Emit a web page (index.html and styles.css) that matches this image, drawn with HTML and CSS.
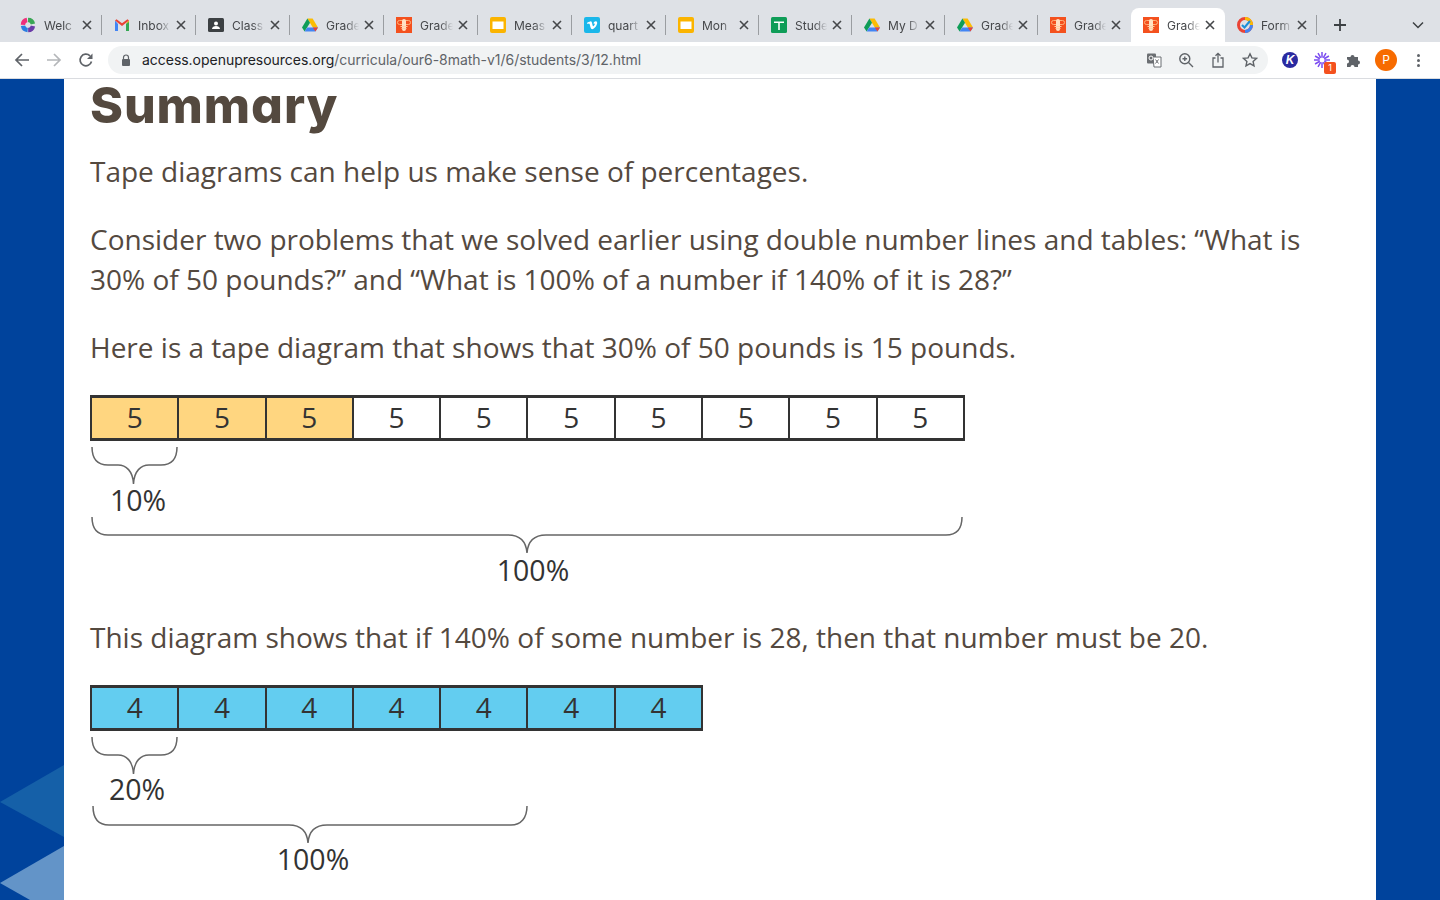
FILE: index.html
```html
<!DOCTYPE html>
<html lang="en">
<head>
  <meta charset="UTF-8" />
  <title>Summary</title>
  <link rel="stylesheet" href="styles.css">
</head>
<body>

  <svg class="defs" width="0" height="0">
    <symbol id="i-drive" viewBox="0 0 16 16">
      <path d="M5.400 1.500h5.200L16 10.500h-5.200z" fill="#fbbc04"/>
      <path d="M5.400 1.500 0 10.600l2.600 4L8 5.700z" fill="#0f9d58"/>
      <path d="M2.600 14.600h10.800l2.600-4.100H5.200z" fill="#4285f4"/>
      <path d="M16 10.500h-5.200l2.600 4.100z" fill="#ea4335"/>
    </symbol>
    <symbol id="i-bee" viewBox="0 0 16 16">
      <rect width="16" height="16" fill="#f4511e"/>
      <rect x="1.500" y="3.500" width="13" height="4" rx="2" fill="none" stroke="#ffb27a" stroke-width="1"/>
      <rect x="6" y="2" width="4" height="12" rx="2" fill="#ffe2c4"/>
      <path d="M4.500 9.500h7M5.500 11.500h5" stroke="#ffd0a6" stroke-width="1.200"/>
    </symbol>
    <symbol id="i-slides" viewBox="0 0 16 16">
      <rect width="16" height="16" rx="2" fill="#fbb400"/>
      <rect x="2.500" y="4.500" width="11" height="7.500" fill="#fff"/>
    </symbol>
    <symbol id="i-close" viewBox="0 0 10 10">
      <path d="M1 1l8 8M9 1l-8 8" stroke="#45474a" stroke-width="1.600" fill="none"/>
    </symbol>
  </svg>

  <!-- Browser tabs -->
  <div class="tabstrip">
    <div class="tab">
      <svg class="favicon" viewBox="0 0 16 16">
        <circle cx="8" cy="8" r="5" fill="none" stroke="#6a3aa8" stroke-width="4.500" stroke-dasharray="6.500 25" stroke-dashoffset="-1"/>
        <circle cx="8" cy="8" r="5" fill="none" stroke="#2a7de1" stroke-width="4.500" stroke-dasharray="6.500 25" stroke-dashoffset="-8"/>
        <circle cx="8" cy="8" r="5" fill="none" stroke="#ef2f7b" stroke-width="4.500" stroke-dasharray="6.500 25" stroke-dashoffset="-15.500"/>
        <circle cx="8" cy="8" r="5" fill="none" stroke="#3aa655" stroke-width="4.500" stroke-dasharray="6.500 25" stroke-dashoffset="-23"/>
        <circle cx="8" cy="8" r="2.500" fill="#dee1e6"/>
      </svg>
      <span class="tab-title">Welc</span>
      <svg class="tab-close"><use href="#i-close"/></svg>
    </div>
    <div class="tab">
      <svg class="favicon" viewBox="0 0 16 16">
        <path d="M1 3.500V14h3V7z" fill="#4285f4"/>
        <path d="M15 3.500V14h-3V7z" fill="#34a853"/>
        <path d="M1 3.500 8 9l7-5.500-1.500-1.200L8 6.300 2.500 2.300z" fill="#ea4335"/>
        <path d="M12 7l3-3.500V5z" fill="#fbbc04"/>
      </svg>
      <span class="tab-title">Inbox</span>
      <svg class="tab-close"><use href="#i-close"/></svg>
    </div>
    <div class="tab">
      <svg class="favicon" viewBox="0 0 16 16">
        <rect width="16" height="14" y="1" rx="1.500" fill="#3c4043"/>
        <circle cx="8" cy="6.500" r="2" fill="#fff"/>
        <path d="M4 12c0-2 2-3 4-3s4 1 4 3z" fill="#fff"/>
      </svg>
      <span class="tab-title">Class</span>
      <svg class="tab-close"><use href="#i-close"/></svg>
    </div>
    <div class="tab">
      <svg class="favicon"><use href="#i-drive"/></svg>
      <span class="tab-title">Grade</span>
      <svg class="tab-close"><use href="#i-close"/></svg>
    </div>
    <div class="tab">
      <svg class="favicon"><use href="#i-bee"/></svg>
      <span class="tab-title">Grade</span>
      <svg class="tab-close"><use href="#i-close"/></svg>
    </div>
    <div class="tab">
      <svg class="favicon"><use href="#i-slides"/></svg>
      <span class="tab-title">Meas</span>
      <svg class="tab-close"><use href="#i-close"/></svg>
    </div>
    <div class="tab">
      <svg class="favicon" viewBox="0 0 16 16">
        <rect width="16" height="16" rx="2" fill="#1ab7ea"/>
        <path d="M2.800 6l.9 1.100c1-.8 1.600-.9 2 .1.600 1.900 1 5 2.500 5 2 0 5-4.200 5-6.300 0-2-3-2.300-3.800 .7 1.600-.7 1.800 .5 .7 2-.8 1.100-1.300 1.100-1.700-1-.4-2.300-.8-3.600-2-3.200C5.200 4.700 3.900 5 2.800 6z" fill="#fff"/>
      </svg>
      <span class="tab-title">quart</span>
      <svg class="tab-close"><use href="#i-close"/></svg>
    </div>
    <div class="tab tab-narrow">
      <svg class="favicon"><use href="#i-slides"/></svg>
      <span class="tab-title">Mon</span>
      <svg class="tab-close"><use href="#i-close"/></svg>
    </div>
    <div class="tab tab-narrow">
      <svg class="favicon" viewBox="0 0 16 16">
        <rect width="16" height="16" rx="1.500" fill="#0f9d58"/>
        <path d="M3 4.500h10v1.500H8.800v7H7.200V6H3z" fill="#fff"/>
      </svg>
      <span class="tab-title">Stude</span>
      <svg class="tab-close"><use href="#i-close"/></svg>
    </div>
    <div class="tab tab-narrow">
      <svg class="favicon"><use href="#i-drive"/></svg>
      <span class="tab-title">My D</span>
      <svg class="tab-close"><use href="#i-close"/></svg>
    </div>
    <div class="tab tab-narrow">
      <svg class="favicon"><use href="#i-drive"/></svg>
      <span class="tab-title">Grade</span>
      <svg class="tab-close"><use href="#i-close"/></svg>
    </div>
    <div class="tab tab-narrow tab-before-active">
      <svg class="favicon"><use href="#i-bee"/></svg>
      <span class="tab-title">Grade</span>
      <svg class="tab-close"><use href="#i-close"/></svg>
    </div>
    <div class="tab tab-active">
      <svg class="favicon"><use href="#i-bee"/></svg>
      <span class="tab-title">Grade</span>
      <svg class="tab-close"><use href="#i-close"/></svg>
    </div>
    <div class="tab tab-last">
      <svg class="favicon" viewBox="0 0 16 16">
        <circle cx="8" cy="8" r="6.500" fill="none" stroke="#ea4335" stroke-width="3"/>
        <path d="M8 1.500A6.500 6.500 0 0 1 14.500 8" fill="none" stroke="#fbbc04" stroke-width="3"/>
        <path d="M14.500 8A6.500 6.500 0 0 1 8 14.500" fill="none" stroke="#4285f4" stroke-width="3"/>
        <path d="M5 8l2.500 2.500L13 4" fill="none" stroke="#1a8fd8" stroke-width="2"/>
      </svg>
      <span class="tab-title">Form</span>
      <svg class="tab-close"><use href="#i-close"/></svg>
    </div>
    <svg class="new-tab" viewBox="0 0 14 14"><path d="M7 1v12M1 7h12" stroke="#3c4043" stroke-width="1.800"/></svg>
    <svg class="tab-search" viewBox="0 0 12 8"><path d="M1 1.500l5 5 5-5" stroke="#3c4043" stroke-width="1.500" fill="none"/></svg>
  </div>

  <!-- Toolbar -->
  <div class="toolbar">
    <svg class="nav-icon" viewBox="0 0 16 16"><path d="M15 8H2M8 2 2 8l6 6" stroke="#5f6368" stroke-width="1.700" fill="none"/></svg>
    <svg class="nav-icon" viewBox="0 0 16 16"><path d="M1 8h13M8 2l6 6-6 6" stroke="#b4b6b9" stroke-width="1.700" fill="none"/></svg>
    <svg class="nav-icon" viewBox="0 0 16 16"><path d="M13.500 9.500A5.800 5.800 0 1 1 12 3.900" stroke="#5f6368" stroke-width="1.700" fill="none"/><path d="M14.500 1.500v5.500H9z" fill="#5f6368"/></svg>
    <div class="omnibox">
      <svg class="lock" viewBox="0 0 10 12"><path d="M2.500 5V3.500a2.500 2.500 0 0 1 5 0V5" stroke="#5f6368" stroke-width="1.200" fill="none"/><rect y="5" width="8" height="7" rx="1" x="1" fill="#5f6368"/></svg>
      <span class="url"><span class="url-host">access.openupresources.org</span>/curricula/our6-8math-v1/6/students/3/12.html</span>
      <div class="omni-actions">
        <svg class="omni-icon" viewBox="0 0 16 16"><rect x="1" y="1.500" width="9" height="10" rx="1" fill="#6b6e72"/><path d="M7 5h8v10H8z" fill="#fff" stroke="#6b6e72"/><path d="M9.500 7.500l3 4M12.500 7.500l-3 4" stroke="#6b6e72"/><circle cx="5" cy="6" r="2" fill="none" stroke="#fff"/></svg>
        <svg class="omni-icon" viewBox="0 0 16 16"><circle cx="6.800" cy="6.800" r="5" stroke="#5f6368" stroke-width="1.400" fill="none"/><path d="M10.500 10.500 15 15M4.500 6.800h4.600M6.800 4.500v4.600" stroke="#5f6368" stroke-width="1.400"/></svg>
        <svg class="omni-icon" viewBox="0 0 16 16"><path d="M5.500 6H3v9h10V6h-2.500M8 10.500V1.500M5.500 3.800 8 1.300l2.500 2.500" stroke="#5f6368" stroke-width="1.300" fill="none"/></svg>
        <svg class="omni-icon" viewBox="0 0 16 16"><path d="M8 1.800l1.900 4.100 4.500.5-3.300 3 .9 4.400L8 11.600l-4 2.200.9-4.400-3.300-3 4.500-.5z" stroke="#5f6368" stroke-width="1.400" fill="none"/></svg>
      </div>
    </div>
    <div class="extensions">
      <div class="ext-k">K</div>
      <div class="ext-burst">
        <svg viewBox="0 0 16 16"><path d="M8 0v16M4 1.070l8 13.860M1.070 4l13.860 8M0 8h16M1.070 12l13.860-8M4 14.930l8-13.860" stroke="#7b4df0" stroke-width="1.500"/><circle cx="8" cy="8" r="2.500" fill="#fff"/></svg>
        <span class="ext-badge">1</span>
      </div>
      <svg class="ext-puzzle" viewBox="0 0 16 16"><path d="M1 5h3.500a2 2 0 1 1 4 0H12v3.500a2 2 0 1 1 0 4V15H8.500a2 2 0 1 0-4 0H1v-3.500a2 2 0 1 0 0-4z" fill="#5f6368"/></svg>
      <div class="avatar">P</div>
      <div class="menu-dots"><i></i><i></i><i></i></div>
    </div>
  </div>

  <!-- Page -->
  <div class="page">
    <div class="side side-left">
      <svg class="side-art" viewBox="0 0 64 135" width="64" height="135">
        <path d="M0 37 64 0v72z" fill="#1560a8"/>
        <path d="M0 118 64 81v54H30z" fill="#6394c8"/>
      </svg>
    </div>

    <main class="content">
      <h1>Summary</h1>
      <p>Tape diagrams can help us make sense of percentages.</p>
      <p>Consider two problems that we solved earlier using double number lines and tables: “What is 30% of 50 pounds?” and “What is 100% of a number if 140% of it is 28?”</p>
      <p>Here is a tape diagram that shows that 30% of 50 pounds is 15 pounds.</p>

      <div class="figure">
        <div class="tape">
          <div class="cell cell-yellow">5</div>
          <div class="cell cell-yellow">5</div>
          <div class="cell cell-yellow">5</div>
          <div class="cell">5</div>
          <div class="cell">5</div>
          <div class="cell">5</div>
          <div class="cell">5</div>
          <div class="cell">5</div>
          <div class="cell">5</div>
          <div class="cell">5</div>
        </div>
        <svg class="braces" width="880" height="150" viewBox="0 0 880 150">
          <path d="M2 5c0 12 5 18 16 18h10c8 0 15 6 15.500 19 .5-13 7.500-19 15.500-19h12c10 0 16-6 16-18"/>
          <text x="48" y="69">10%</text>
          <path d="M2 75c0 12 5 18 16 18h400c10 0 18 5 19 18 1-13 9-18 19-18h400c10 0 16-6 16-18"/>
          <text x="443" y="139">100%</text>
        </svg>
      </div>

      <p class="after-figure">This diagram shows that if 140% of some number is 28, then that number must be 20.</p>

      <div class="figure">
        <div class="tape">
          <div class="cell cell-blue">4</div>
          <div class="cell cell-blue">4</div>
          <div class="cell cell-blue">4</div>
          <div class="cell cell-blue">4</div>
          <div class="cell cell-blue">4</div>
          <div class="cell cell-blue">4</div>
          <div class="cell cell-blue">4</div>
        </div>
        <svg class="braces" width="880" height="150" viewBox="0 0 880 150">
          <path d="M2 5c0 12 5 18 16 18h10c8 0 15 6 15.500 19 .5-13 7.500-19 15.500-19h12c10 0 16-6 16-18"/>
          <text x="47" y="68">20%</text>
          <path d="M3 74c0 12 5 19 16 19h180c10 0 18 5 19 18 1-13 9-18 19-18h184c10 0 16-7 16-19"/>
          <text x="223" y="138">100%</text>
        </svg>
      </div>
    </main>

    <div class="side"></div>
  </div>

</body>
</html>
```

FILE: styles.css
```css
html, body {
  margin: 0;
  height: 900px;
  overflow: hidden;
}

body {
  font-family: 'Open Sans', sans-serif;
  background: #fff;
  color: #54493f;
  display: flex;
  flex-direction: column;
}

.defs {
  position: absolute;
}

/* Tab strip */
.tabstrip {
  height: 42px;
  flex: none;
  background: #dee1e6;
  display: flex;
  align-items: flex-end;
  padding-left: 8px;
  box-sizing: border-box;
  font-family: Inter, 'Liberation Sans', sans-serif;
}

.tab {
  width: 94px;
  height: 34px;
  flex: none;
  box-sizing: border-box;
  display: flex;
  align-items: center;
  padding: 0 10px 0 12px;
  position: relative;
  font-size: 12px;
  color: #45474a;
}

.tab::after {
  content: "";
  position: absolute;
  right: 0;
  top: 7px;
  height: 20px;
  width: 1px;
  background: #9a9da1;
}

.tab-narrow {
  width: 93px;
}

.tab-last {
  width: 92px;
}

.tab-active {
  background: #fff;
  border-radius: 8px 8px 0 0;
}

.tab-active::after,
.tab-before-active::after {
  display: none;
}

.favicon {
  width: 16px;
  height: 16px;
  flex: none;
  margin-right: 8px;
}

.tab-title {
  flex: 1;
  white-space: nowrap;
  -webkit-mask-image: linear-gradient(to right, #000 55%, transparent 92%);
  mask-image: linear-gradient(to right, #000 55%, transparent 92%);
}

.tab-close {
  width: 10px;
  height: 10px;
  flex: none;
  margin-left: 2px;
}

.new-tab {
  width: 14px;
  height: 14px;
  margin: 0 0 10px 16px;
}

.tab-search {
  width: 12px;
  height: 8px;
  margin: 0 0 13px auto;
  padding-right: 16px;
}

/* Toolbar */
.toolbar {
  height: 36px;
  flex: none;
  background: #fff;
  border-bottom: 1px solid #dadce0;
  display: flex;
  align-items: center;
  padding-left: 6px;
  font-family: Inter, 'Liberation Sans', sans-serif;
}

.nav-icon {
  width: 16px;
  height: 16px;
  flex: none;
  margin: 0 8px;
}

.omnibox {
  width: 1160px;
  height: 28px;
  margin-left: 6px;
  border-radius: 14px;
  background: #f1f3f4;
  display: flex;
  align-items: center;
  padding: 0 10px 0 13px;
  box-sizing: border-box;
  font-size: 14px;
  letter-spacing: -0.03px;
  color: #5f6368;
}

.lock {
  width: 10px;
  height: 12px;
  margin-right: 11px;
}

.url {
  padding-bottom: 2px;
}

.url-host {
  color: #202124;
}

.omni-actions {
  margin-left: auto;
  display: flex;
  gap: 16px;
}

.omni-icon {
  width: 16px;
  height: 16px;
}

.extensions {
  display: grid;
  grid-auto-flow: column;
  grid-auto-columns: 32px;
  justify-items: center;
  align-items: center;
  margin-left: 6px;
}

.ext-k {
  width: 16px;
  height: 16px;
  border-radius: 50%;
  background: #2a2aa0;
  color: #fff;
  font: italic 700 12px/16px 'Liberation Sans', sans-serif;
  text-align: center;
}

.ext-burst {
  width: 16px;
  height: 16px;
  position: relative;
}

.ext-burst svg {
  display: block;
}

.ext-badge {
  position: absolute;
  left: 10px;
  top: 10px;
  width: 12px;
  height: 12px;
  background: #f4511e;
  border-radius: 2px;
  color: #fff;
  font-size: 9px;
  line-height: 12px;
  text-align: center;
}

.ext-puzzle {
  width: 16px;
  height: 16px;
}

.avatar {
  width: 22px;
  height: 22px;
  border-radius: 50%;
  background: #f76b00;
  color: #fff;
  font-size: 12px;
  line-height: 22px;
  text-align: center;
}

.menu-dots {
  display: flex;
  flex-direction: column;
  gap: 2px;
}

.menu-dots i {
  width: 3px;
  height: 3px;
  border-radius: 50%;
  background: #5f6368;
}

/* Page */
.page {
  flex: 1;
  display: flex;
}

.side {
  width: 64px;
  flex: none;
  background: #00439c;
}

.side-left {
  position: relative;
}

.side-art {
  position: absolute;
  left: 0;
  bottom: 0;
}

.content {
  flex: 1;
  padding: 0 26px;
}

h1 {
  margin: 0 0 19px;
  font-family: Inter, sans-serif;
  font-feature-settings: "cv11";
  font-weight: 800;
  font-size: 50px;
  line-height: 53px;
  letter-spacing: 0.9px;
  color: #54493f;
}

p {
  margin: 0 0 28px;
  font-size: 28px;
  line-height: 40px;
}

.tape {
  display: grid;
  grid-auto-columns: 87.3px;
  grid-auto-flow: column;
  width: max-content;
  height: 46px;
  border: solid #333;
  border-width: 3px 0 3px 2px;
  box-sizing: border-box;
  color: #333;
}

.cell {
  border-right: 2px solid #333;
  font-size: 28px;
  line-height: 38px;
  text-align: center;
}

.cell-yellow {
  background: #ffd680;
}

.cell-blue {
  background: #63cdf0;
}

.braces {
  display: block;
  margin-top: 1px;
}

.braces path {
  fill: none;
  stroke: #666;
  stroke-width: 1.5;
}

.braces text {
  font-size: 28.5px;
  fill: #333;
  text-anchor: middle;
}

.after-figure {
  margin-top: 25px;
}
```
